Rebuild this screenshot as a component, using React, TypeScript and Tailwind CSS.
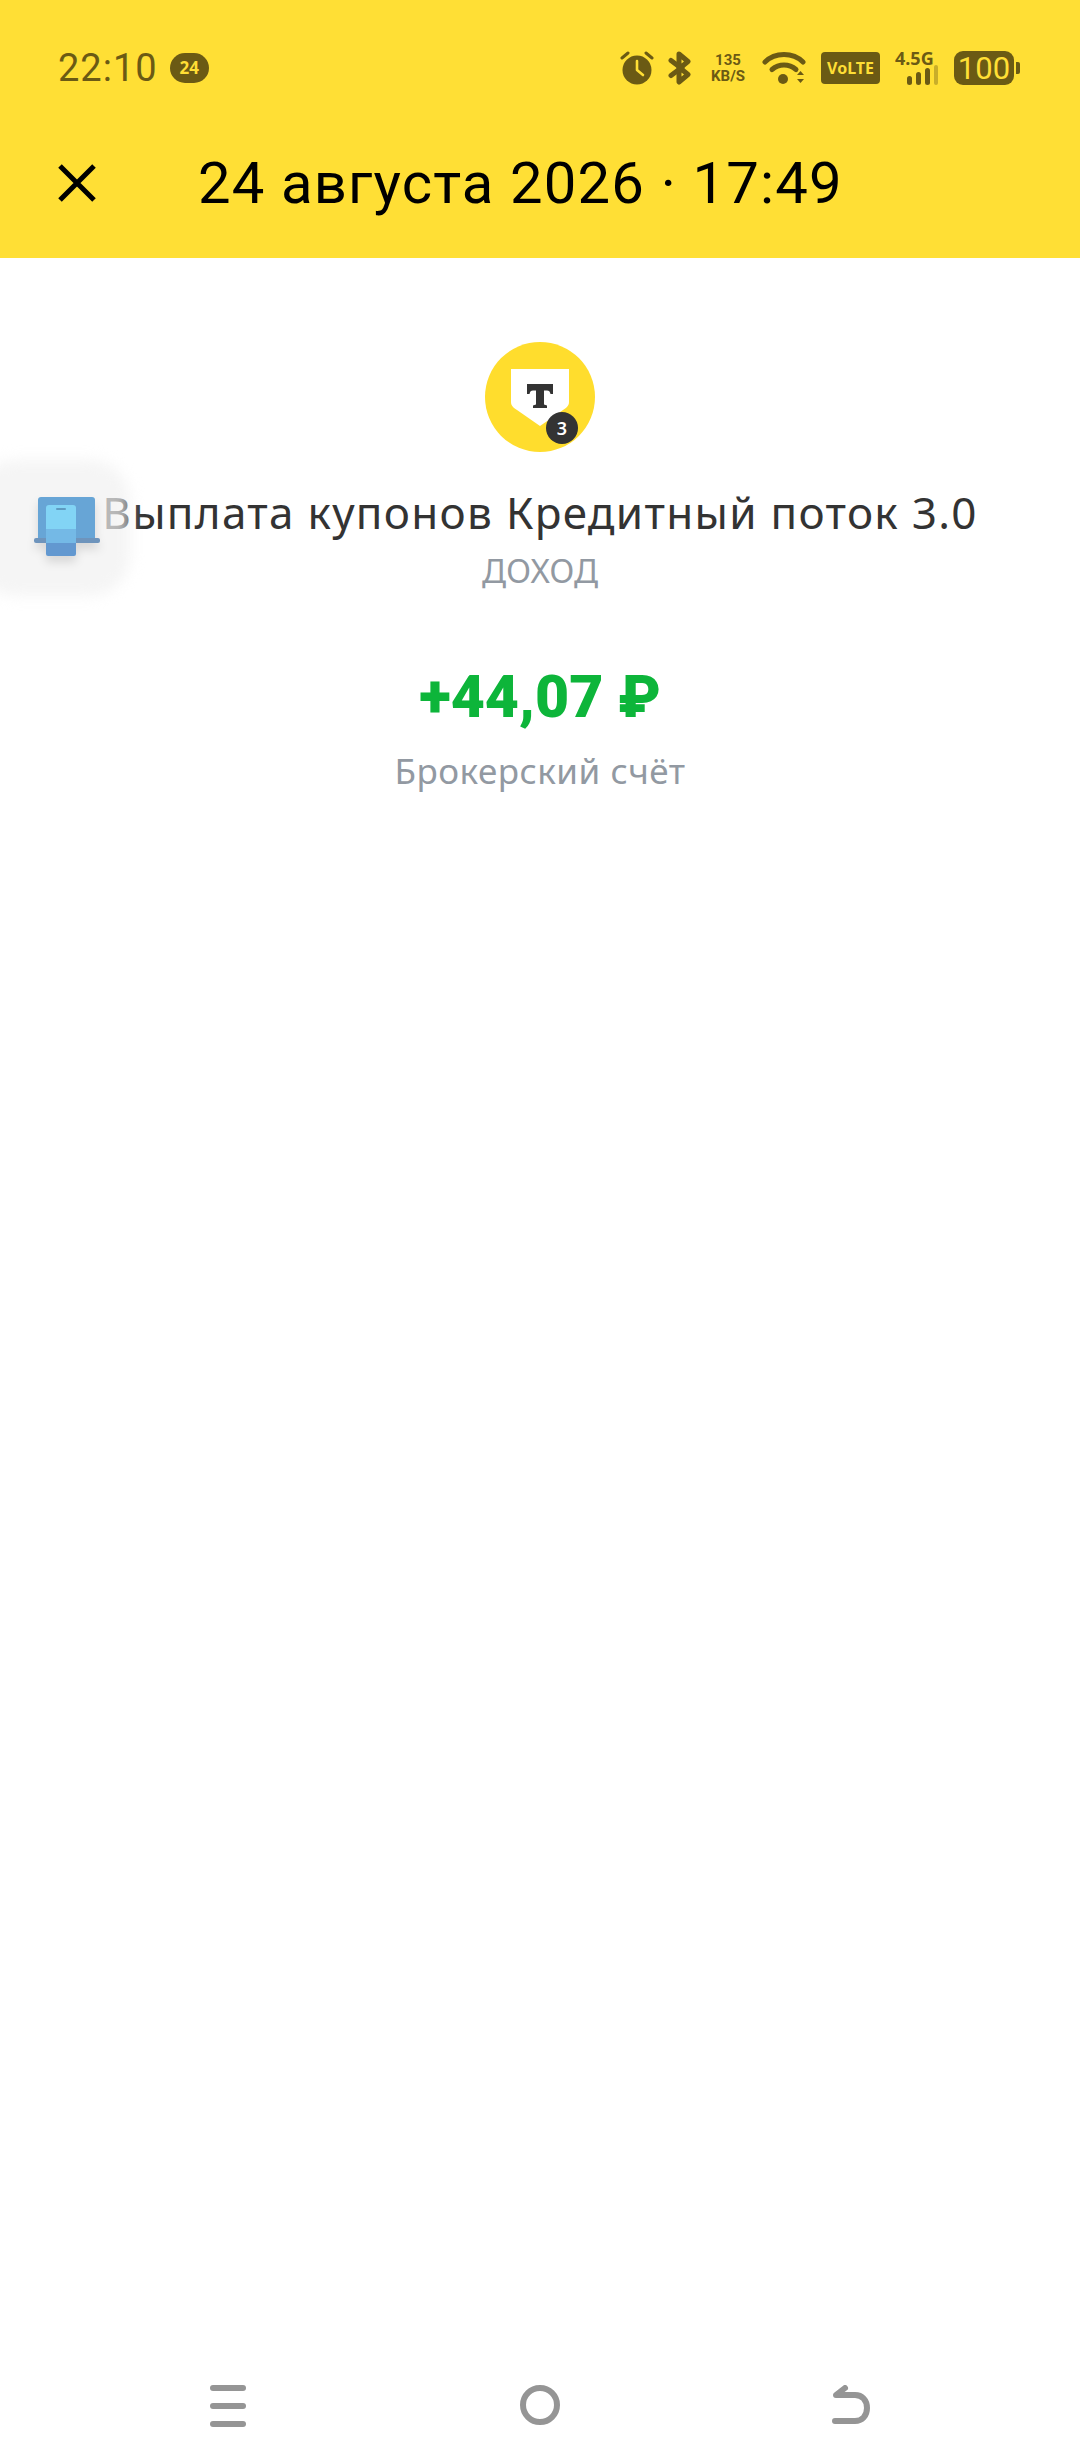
const SB = "#6b5a14";

function Alarm() {
  return (
    <svg width="34" height="34" viewBox="0 0 34 34" fill="none">
      <circle cx="17" cy="19" r="14.5" fill={SB} />
      <path d="M17 10v9l6 5" stroke="#FFDF35" strokeWidth="2.6" strokeLinecap="round" strokeLinejoin="round" />
      <path d="M2 7l6-5M32 7l-6-5" stroke={SB} strokeWidth="3" strokeLinecap="round" />
    </svg>
  );
}

function Bluetooth() {
  return (
    <svg width="24" height="34" viewBox="0 0 24 34" fill="none">
      <path d="M11 3l9 7.500-8 6.500 8 6.500-9 7.500z" stroke={SB} strokeWidth="5" strokeLinejoin="round" />
      <path d="M3 9.500L13 17 3 24.500" stroke={SB} strokeWidth="5" strokeLinecap="round" />
    </svg>
  );
}

function Wifi() {
  return (
    <svg width="44" height="34" viewBox="0 0 44 34" fill="none">
      <path d="M3 11C13 1 31 1 41 11" stroke={SB} strokeWidth="5" strokeLinecap="round" />
      <path d="M10 18.500c7-6 17-6 24 0" stroke={SB} strokeWidth="5" strokeLinecap="round" />
      <circle cx="21" cy="28" r="5" fill={SB} />
      <path d="M35 24l3.500-4 3.500 4zM35 28l3.500 4 3.500-4z" fill={SB} />
    </svg>
  );
}

function Signal() {
  return (
    <div className="relative h-[34px] w-[44px]">
      <span className="absolute left-0 top-[-3px] text-[18px] font-bold leading-[20px] text-[#6b5a14]">4.5G</span>
      <div className="absolute bottom-0 left-[12px] flex items-end gap-[4px]">
        <span className="h-[9px] w-[5px] rounded-full bg-[#6b5a14]" />
        <span className="h-[13px] w-[5px] rounded-full bg-[#6b5a14]" />
        <span className="h-[17px] w-[5px] rounded-full bg-[#6b5a14]" />
        <span className="h-[20px] w-[4px] rounded-full bg-[#c9ae2a]" />
      </div>
    </div>
  );
}

function LogoMark() {
  return (
    <svg width="58" height="57" viewBox="0 0 58 57">
      <path d="M0 0H58V33C58 37 55 39 52 41L29 57 6 41C3 39 0 37 0 33Z" fill="#ffffff" />
      <path d="M16 15H42V25H39.500C39 22.500 38 21.500 36 21.500H33V35.500L36 36.500V39H22V36.500L25 35.500V21.500H22C20 21.500 19 22.500 18.500 25H16Z" fill="#333333" />
    </svg>
  );
}

function TileIcon() {
  return (
    <svg width="66" height="60" viewBox="0 0 66 60">
      <rect x="4" y="0" width="57" height="44" rx="3" fill="#67A5D6" />
      <rect x="0" y="41" width="66" height="5" rx="2" fill="#6E94BC" />
      <path d="M12 11a3 3 0 0 1 3-3h24a3 3 0 0 1 3 3v21H12z" fill="#82D4F5" />
      <rect x="12" y="32" width="30" height="14" fill="#74B9E6" />
      <path d="M12 46h30v11a2 2 0 0 1-2 2H14a2 2 0 0 1-2-2z" fill="#6298D0" />
      <rect x="22" y="11" width="10" height="2" rx="1" fill="#5E9AC0" />
    </svg>
  );
}

export default function App() {
  return (
    <div className="relative flex h-[2460px] w-[1080px] flex-col overflow-hidden bg-white [font-family:'Noto_Sans',sans-serif]">
      <header className="h-[258px] shrink-0 bg-[#FFDF35]">
        <div className="mt-[43px] flex h-[50px] items-center pl-[58px] pr-[60px]">
          <span className="text-[38px] leading-[50px] tracking-[1px] text-[#6b5a14] [font-family:Roboto,sans-serif]">22:10</span>
          <span className="ml-[12px] flex h-[30px] w-[39px] items-center justify-center rounded-[15px] bg-[#6b5a14] text-[17px] font-bold text-[#FFDF35]">24</span>
          <div className="ml-auto flex items-center">
            <Alarm />
            <div className="ml-[14px]"><Bluetooth /></div>
            <div className="ml-[15px] w-[42px] text-center text-[15px] font-bold leading-[16px] text-[#6b5a14] [font-family:Roboto,sans-serif]">
              135<br />KB/S
            </div>
            <div className="ml-[13px]"><Wifi /></div>
            <span className="ml-[15px] flex h-[32px] w-[59px] items-center justify-center rounded-[4px] bg-[#6b5a14] text-[16px] font-bold text-[#FFDF35]">VoLTE</span>
            <div className="ml-[15px]"><Signal /></div>
            <div className="ml-[15px] flex items-center">
              <span className="flex h-[34px] w-[60px] items-center justify-center rounded-[9px] bg-[#6b5a14] text-[31px] leading-none text-[#FFDF35] [font-family:Roboto,sans-serif]">100</span>
              <span className="ml-[2px] h-[12px] w-[4px] rounded-r-[2px] bg-[#6b5a14]" />
            </div>
          </div>
        </div>
        <div className="mt-[55px] flex h-[70px] items-center pl-[58px]">
          <svg width="38" height="38" viewBox="0 0 38 38" fill="none">
            <path d="M2 2l34 34M36 2L2 36" stroke="#000000" strokeWidth="5" />
          </svg>
          <h1 className="ml-[102px] whitespace-nowrap text-[58px] font-normal leading-[70px] tracking-[1.15px] text-black [font-family:Roboto,sans-serif]">24 августа 2026 · 17:49</h1>
        </div>
      </header>

      <main className="flex flex-1 flex-col items-center pt-[84px]">
        <div className="relative flex h-[110px] w-[110px] items-center justify-center rounded-full bg-[#FFDD2D]">
          <LogoMark />
          <span className="absolute bottom-[8px] right-[17px] flex h-[32px] w-[32px] items-center justify-center rounded-full bg-[#333333] text-[18px] font-semibold text-white">3</span>
        </div>
        <h2 className="mt-[31px] whitespace-nowrap text-[44px] font-normal leading-[58px] tracking-[1.3px] text-[#333333]">Выплата купонов Кредитный поток 3.0</h2>
        <p className="mt-[5px] text-[33px] leading-[50px] text-[#9299a2]">ДОХОД</p>
        <p className="mt-[65px] text-[59px] font-black leading-[72px] text-[#0db53a] [font-family:Roboto,sans-serif]">+44,07 ₽</p>
        <p className="mt-[14px] whitespace-nowrap text-[35px] leading-[48px] tracking-[0.5px] text-[#9299a2]">Брокерский счёт</p>
      </main>

      <nav className="flex h-[75px] shrink-0 items-start justify-between px-[210px]">
        <div className="flex h-[42px] w-[36px] flex-col justify-between">
          <span className="h-[6px] rounded-full bg-[#959595]" />
          <span className="h-[6px] rounded-full bg-[#959595]" />
          <span className="h-[6px] rounded-full bg-[#959595]" />
        </div>
        <div className="ml-[2px] h-[40px] w-[40px] rounded-full border-[6px] border-[#959595]" />
        <svg width="38" height="42" viewBox="0 0 38 42" fill="none">
          <path d="M3 36h20c7 0 12-5 12-13s-5-13-12-13H4l9-7" stroke="#959595" strokeWidth="6" strokeLinecap="round" strokeLinejoin="round" />
        </svg>
      </nav>

      <div className="absolute left-[-24px] top-[460px] h-[136px] w-[154px] rounded-[40px] bg-[#f1f1f1]/70 blur-[7px]" />
      <div className="absolute left-[34px] top-[497px] drop-shadow-[0_6px_5px_rgba(0,0,0,0.12)]">
        <TileIcon />
      </div>
    </div>
  );
}
